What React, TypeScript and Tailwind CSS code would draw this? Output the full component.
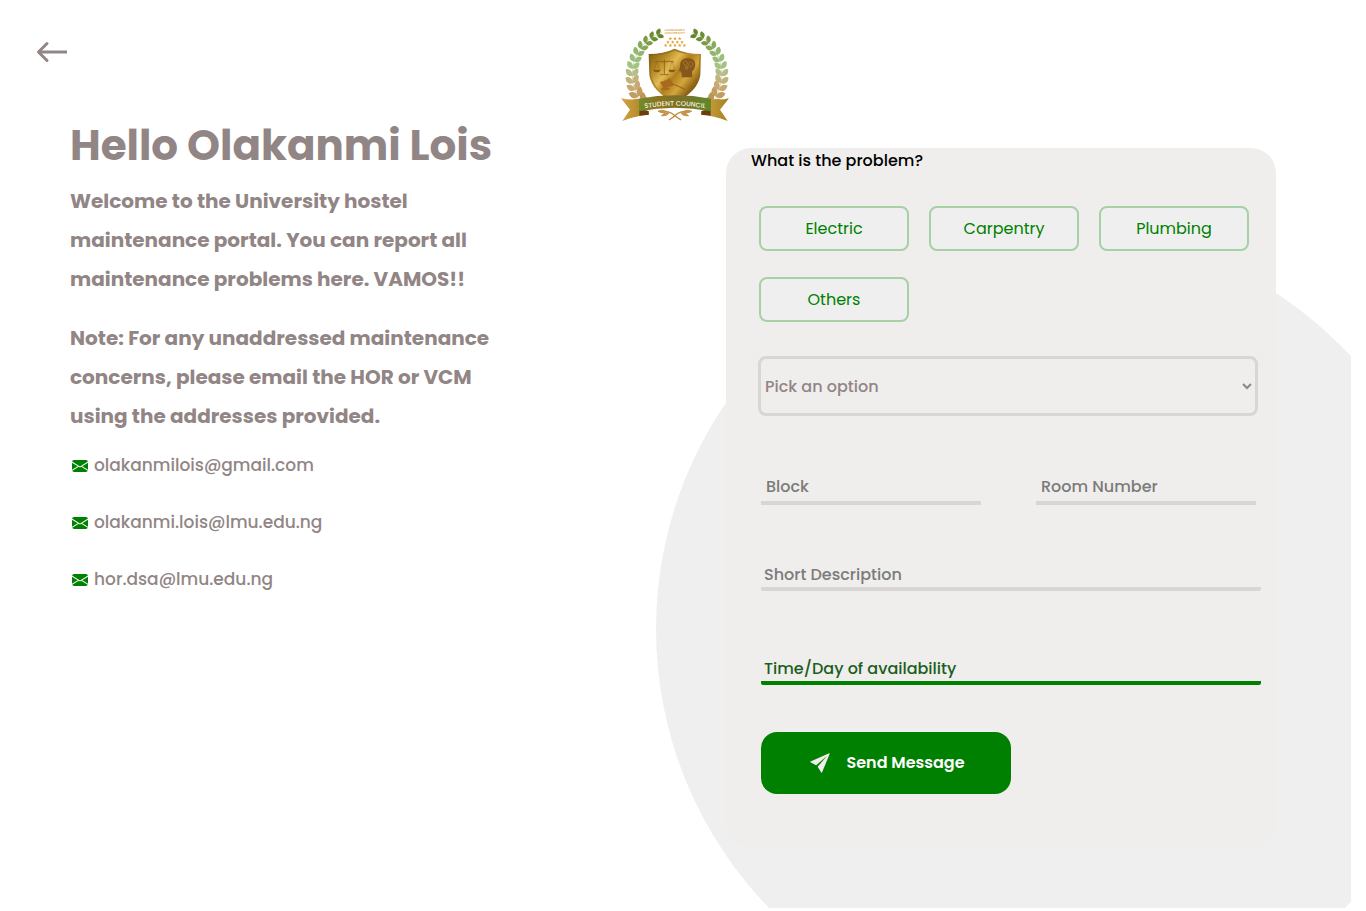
import { useState } from "react";
import { BsEnvelopeFill } from "react-icons/bs";
import { IoIosSend } from "react-icons/io";

const problems = ["Electric", "Carpentry", "Plumbing", "Others"];

const emails = ["olakanmilois@gmail.com", "olakanmi.lois@lmu.edu.ng", "hor.dsa@lmu.edu.ng"];

const leafColors = [
  "#b78f4c", "#bd9556", "#c39c60", "#c9a873", "#c2b27c", "#b3bf86", "#a3c385",
  "#98bd7c", "#93b572", "#86a95c", "#7a9c48", "#6c8f35", "#64862c",
];

function Laurel() {
  return (
    <g>
      <path d="M152 288 C92 250 82 160 118 105 C134 80 158 62 186 53" fill="none" stroke="#c9c493" strokeWidth="2" />
      {leafColors.map((color, i) => {
        const deg = 130 + i * 9.6;
        const rad = (deg * Math.PI) / 180;
        const size = 1.08 - i * 0.03;
        const x = 225 + 128 * Math.cos(rad);
        const y = 178 + 130 * Math.sin(rad);
        return (
          <g key={color} fill={color} transform={`translate(${x} ${y}) rotate(${deg + 90}) scale(${size})`}>
            <path d="M0 0 C-3 -14 7 -23 22 -20 C25 -8 14 2 0 0Z" />
            <path d="M0 0 C-3 14 7 23 22 20 C25 8 14 -2 0 0Z" />
          </g>
        );
      })}
    </g>
  );
}

function CouncilLogo() {
  const stars = [
    [211, 71], [225, 71], [239, 71],
    [204, 81], [218, 81], [232, 81], [246, 81],
    [197, 91], [211, 91], [225, 91], [239, 91], [253, 91],
  ];
  return (
    <svg viewBox="60 33 330 285" className="h-[95px] w-[110px]" role="img" aria-label="Landmark University Student Council">
      <defs>
        <linearGradient id="shield" x1="0" y1="0.1" x2="1" y2="0.9">
          <stop offset="0" stopColor="#8a6614" />
          <stop offset="0.2" stopColor="#b98c26" />
          <stop offset="0.36" stopColor="#e2bb55" />
          <stop offset="0.5" stopColor="#b07f1c" />
          <stop offset="0.66" stopColor="#d3a63c" />
          <stop offset="0.82" stopColor="#8f6414" />
          <stop offset="1" stopColor="#5c3c08" />
        </linearGradient>
        <linearGradient id="rim" x1="0" y1="0" x2="1" y2="1">
          <stop offset="0" stopColor="#7b5b0e" />
          <stop offset="0.5" stopColor="#b99130" />
          <stop offset="1" stopColor="#5c3f08" />
        </linearGradient>
        <linearGradient id="ribbon" x1="0" y1="0" x2="1" y2="0">
          <stop offset="0" stopColor="#6f8c2c" />
          <stop offset="0.25" stopColor="#8a7320" />
          <stop offset="0.6" stopColor="#78702a" />
          <stop offset="1" stopColor="#5f8a2a" />
        </linearGradient>
        <linearGradient id="tail" x1="0" y1="0" x2="1" y2="0">
          <stop offset="0" stopColor="#d4a443" />
          <stop offset="1" stopColor="#a3801f" />
        </linearGradient>
        <path id="ribbonLine" d="M125 282 Q225 262 325 282" />
      </defs>

      <Laurel />
      <g transform="translate(462 0) scale(-1 1)">
        <Laurel />
      </g>

      <g fill="#dfb264" fontFamily="Poppins, sans-serif" fontWeight="600" fontSize="11" textAnchor="middle">
        <text x="225" y="49">LANDMARK</text>
        <text x="225" y="58">UNIVERSITY</text>
      </g>
      <g fill="#dda640">
        {stars.map(([x, y]) => (
          <path
            key={`${x}-${y}`}
            transform={`translate(${x} ${y})`}
            d="M0 -5.5 L1.6 -1.8 L5.5 -1.6 L2.5 1.1 L3.4 5 L0 2.8 L-3.4 5 L-2.5 1.1 L-5.5 -1.6 L-1.6 -1.8Z"
          />
        ))}
      </g>

      <path d="M146 117 Q190 117 224 101 Q260 117 303 117 L301 180 Q294 230 224 263 Q156 230 148 180Z" fill="url(#rim)" />
      <path d="M151 121 Q192 121 224 107 Q258 121 298 121 L296 179 Q289 226 224 258 Q161 226 153 179Z" fill="url(#shield)" />

      <g fill="none" stroke="#8a5a16" strokeWidth="2.5">
        <path d="M193 134 V177 M164 141 Q178 136 193 141 Q208 136 222 141 M181 179 H206" />
        <path d="M170 141 L162 164 M170 141 L179 164 M216 141 L208 164 M216 141 L225 164" strokeWidth="1" />
      </g>
      <path d="M160 164 H182 Q179 172 171 172 Q162 172 160 164Z M205 164 H227 Q224 172 216 172 Q207 172 205 164Z" fill="#8a5a16" />
      <path d="M245 187 Q247 176 243 170 L237 168 L240 157 Q237 131 262 129 Q287 129 286 151 Q285 162 276 170 L277 187Z" fill="#85571b" />
      <g fill="none" stroke="#bd8930" strokeWidth="2.5">
        <circle cx="256" cy="144" r="6" strokeDasharray="3 1.5" />
        <circle cx="272" cy="148" r="7" strokeDasharray="3 1.5" />
        <circle cx="260" cy="158" r="4" />
      </g>
      <path d="M184 201 L205 192 L216 212 L195 220Z M180 202 L186 199 L198 220 L192 223Z M204 191 L210 189 L221 211 L215 214Z" fill="#aa6a1d" />
      <path d="M213 204 L257 224" stroke="#aa6a1d" strokeWidth="4" />
      <path d="M183 222 H209" stroke="#a0641b" strokeWidth="4" />

      <g fill="none" stroke="#bd8b3a" strokeWidth="4">
        <path d="M174 289 Q207 286 222 300 Q233 309 243 315" />
        <path d="M275 289 Q242 286 227 300 Q217 309 207 315" />
      </g>
      <path d="M173 289 Q186 279 201 290 Q187 300 173 289Z M276 289 Q263 279 248 290 Q262 300 276 289Z M182 303 Q194 290 210 291 Q202 307 182 303Z M268 303 Q256 290 240 291 Q248 307 268 303Z" fill="#c5944a" />

      <path d="M63 250 Q90 257 119 251 L119 279 L146 290 V299 Q110 301 67 318 L90 284Z" fill="url(#tail)" />
      <path d="M387 250 Q360 257 331 251 L331 279 L304 290 V299 Q340 301 383 318 L360 284Z" fill="url(#tail)" />
      <path d="M118 281 L146 288 V300 Q132 299 118 302Z M332 281 L304 288 V300 Q318 299 332 302Z" fill="#6a3d12" />
      <path d="M117 251 Q225 231 333 251 V289 Q225 267 117 289Z" fill="url(#ribbon)" />
      <text fill="#f7f2db" fontFamily="Poppins, sans-serif" fontWeight="500" fontSize="20">
        <textPath href="#ribbonLine" startOffset="50%" textAnchor="middle">STUDENT COUNCIL</textPath>
      </text>
    </svg>
  );
}

export default function App() {
  const [problem, setProblem] = useState("");

  return (
    <div className="bg-white pr-[15px] font-['Poppins',sans-serif]">
      <main className="relative isolate min-h-[908px] overflow-hidden">
        <div className="absolute top-[228px] -right-[107px] -z-10 size-[802px] rounded-full bg-[#efefef]" />

        <header className="grid h-[122px] grid-cols-[1fr_auto_1fr] items-start pr-0.5">
          <a href="#back" aria-label="Back" className="mt-10 ml-9 w-8 text-[#918585]">
            <svg viewBox="0 0 32 24" className="h-6 w-8" fill="none" stroke="currentColor" strokeWidth="3">
              <path d="M2.5 12 H31" />
              <path d="M11 3.5 L2.5 12 L11 20.5" strokeLinecap="round" strokeLinejoin="round" />
            </svg>
          </a>
          <div className="mt-[26px]">
            <CouncilLogo />
          </div>
        </header>

        <div className="flex items-start justify-between pr-[75px] pl-[70px]">
          <section className="text-[#918585]">
            <h1 className="text-[42px] leading-[48px] font-bold whitespace-nowrap">Hello Olakanmi Lois</h1>
            <p className="mt-3 text-[20px] leading-[39px] font-bold">
              Welcome to the University hostel
              <br />
              maintenance portal. You can report all
              <br />
              maintenance problems here. VAMOS!!
            </p>
            <p className="mt-5 text-[20px] leading-[39px] font-bold">
              Note: For any unaddressed maintenance
              <br />
              concerns, please email the HOR or VCM
              <br />
              using the addresses provided.
            </p>
            <ul className="mt-4 flex flex-col gap-[30px]">
              {emails.map((email) => (
                <li key={email}>
                  <a href={`mailto:${email}`} className="flex items-center gap-1.5 pl-0.5 text-[17px] leading-[27px] font-medium">
                    <BsEnvelopeFill className="size-4 text-[#008000]" />
                    {email}
                  </a>
                </li>
              ))}
            </ul>
          </section>

          <form
            className="mt-[26px] min-h-[700px] w-[550px] rounded-[25px] bg-[#efeeec] text-base font-medium"
            onSubmit={(e) => e.preventDefault()}
          >
            <h2 className="pl-[25px] leading-[26px] text-black">What is the problem?</h2>

            <div className="pt-8 pr-[18px] pl-8">
              <div className="flex flex-wrap gap-x-5 gap-y-[26px] px-px">
                {problems.map((name) => (
                  <button
                    key={name}
                    type="button"
                    aria-pressed={problem === name}
                    onClick={() => setProblem(name)}
                    className="h-[45px] w-[150px] rounded-lg border-2 border-[#a6d0a5] bg-[#efefef] font-normal text-[#008000]"
                  >
                    {name}
                  </button>
                ))}
              </div>

              <select
                aria-label="Pick an option"
                defaultValue=""
                className="mt-[34px] h-[60px] w-full rounded-lg border-3 border-[#d7d6d4] bg-[#efeeec] text-[#918585]"
              >
                <option value="">Pick an option</option>
                <option value="repair">Repair</option>
                <option value="replace">Replacement</option>
              </select>

              <div className="-mr-[3px] flex flex-col pl-[3px]">
                <div className="mt-[53px] flex gap-[55px]">
                  <input
                    aria-label="Block"
                    placeholder="Block"
                    className="h-9 w-[220px] border-b-4 border-[#d7d6d4] bg-transparent px-[5px] pt-0.5 placeholder:text-[#7b7b7a]"
                  />
                  <input
                    aria-label="Room Number"
                    placeholder="Room Number"
                    className="h-9 w-[220px] border-b-4 border-[#d7d6d4] bg-transparent px-[5px] pt-0.5 placeholder:text-[#7b7b7a]"
                  />
                </div>

                <label htmlFor="description" className="mt-[57px] pl-[3px] leading-[26px] text-[#7b7b7a]">
                  Short Description
                </label>
                <input id="description" className="-mt-[26px] h-[29px] rounded-xs border-b-4 border-[#d7d6d4] bg-transparent px-[3px]" />

                <label htmlFor="availability" className="mt-[65px] pl-[3px] leading-[26px] text-[#1b5e20]">
                  Time/Day of availability
                </label>
                <input id="availability" className="-mt-[26px] h-[29px] rounded-xs border-b-4 border-[#008000] bg-transparent px-[3px]" />

                <button
                  type="submit"
                  className="mt-[47px] flex h-[62px] w-[250px] items-center justify-center gap-[13px] rounded-2xl bg-[#008000] font-semibold text-white"
                >
                  <IoIosSend className="size-[26px] text-[#efeeec]" />
                  Send Message
                </button>
              </div>
            </div>
          </form>
        </div>
      </main>
    </div>
  );
}
